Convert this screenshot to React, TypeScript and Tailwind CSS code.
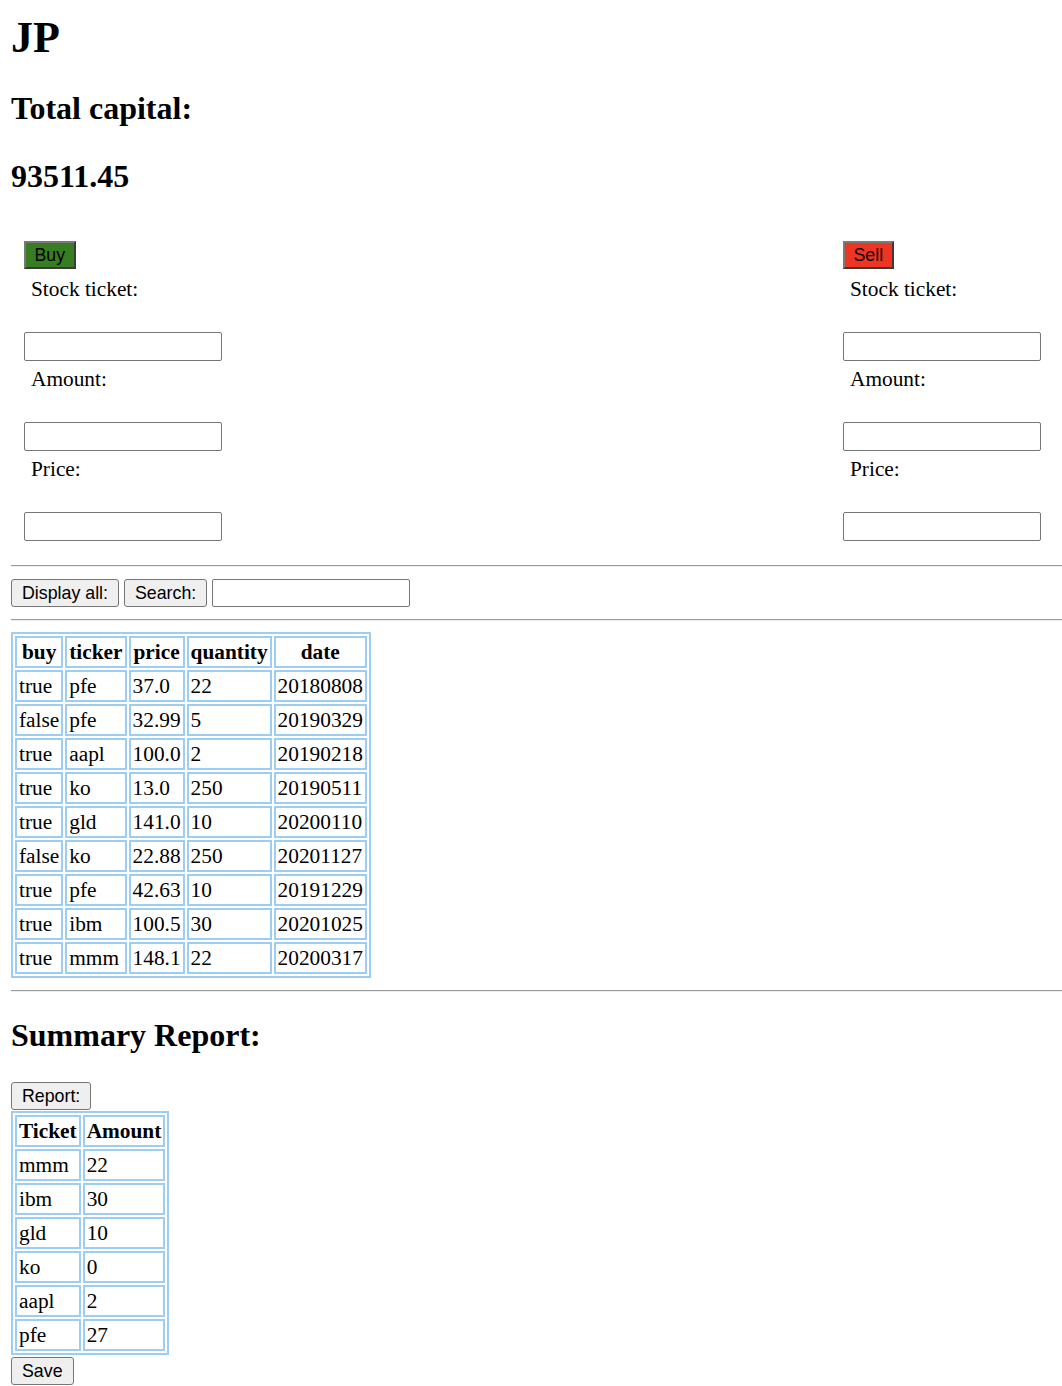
import React from "react";

const trades = [
  ["true", "pfe", "37.0", "22", "20180808"],
  ["false", "pfe", "32.99", "5", "20190329"],
  ["true", "aapl", "100.0", "2", "20190218"],
  ["true", "ko", "13.0", "250", "20190511"],
  ["true", "gld", "141.0", "10", "20200110"],
  ["false", "ko", "22.88", "250", "20201127"],
  ["true", "pfe", "42.63", "10", "20191229"],
  ["true", "ibm", "100.5", "30", "20201025"],
  ["true", "mmm", "148.1", "22", "20200317"],
];

const summary = [
  ["mmm", "22"],
  ["ibm", "30"],
  ["gld", "10"],
  ["ko", "0"],
  ["aapl", "2"],
  ["pfe", "27"],
];

const cell =
  "border-2 border-[#9dcdf3] px-[2px] py-[2px] leading-[24px] text-[21.33px] whitespace-nowrap";

function Hr() {
  return <div className="h-0 border-t border-t-[#9a9a9a] border-b border-b-[#eeeeee]" />;
}

function Btn({ children }: { children: React.ReactNode }) {
  return (
    <button className="h-[28px] px-[10px] bg-[#efefef] border border-[#767676] rounded-[3px] text-[17.8px] leading-[20px] text-black font-['Liberation_Sans',Arial,sans-serif]">
      {children}
    </button>
  );
}

function Field() {
  return <input className="block w-[198px] h-[29px] border border-[#767676] rounded-[2px] bg-white" />;
}

function TradeForm({ label, color }: { label: string; color: string }) {
  return (
    <div className="flex flex-col">
      <button
        className={
          "self-start h-[28px] px-[8.5px] border-2 border-t-[#7a7a7a] border-l-[#7a7a7a] border-r-[#3a3a3a] border-b-[#3a3a3a] text-[17.8px] leading-[20px] text-black font-['Liberation_Sans',Arial,sans-serif] " +
          color
        }
      >
        {label}
      </button>
      <p className="mt-[8px] ml-[7px] text-[21.33px] leading-[24px]">Stock ticket:</p>
      <div className="mt-[31px]">
        <Field />
      </div>
      <p className="mt-[6px] ml-[7px] text-[21.33px] leading-[24px]">Amount:</p>
      <div className="mt-[31px]">
        <Field />
      </div>
      <p className="mt-[6px] ml-[7px] text-[21.33px] leading-[24px]">Price:</p>
      <div className="mt-[31px]">
        <Field />
      </div>
    </div>
  );
}

export default function App() {
  return (
    <div className="bg-white min-h-screen pl-[11px] pt-[12px] text-black font-['Liberation_Serif','Times_New_Roman',serif]">
      <h1 className="text-[44px] font-bold leading-[52px]">JP</h1>
      <h2 className="mt-[26px] text-[32px] font-bold leading-[37px]">Total capital:</h2>
      <h2 className="mt-[31px] text-[32px] font-bold leading-[37px]">93511.45</h2>

      <div className="mt-[46px] flex justify-between pl-[13px] pr-[21px]">
        <TradeForm label="Buy" color="bg-[#377d22]" />
        <TradeForm label="Sell" color="bg-[#ee3524]" />
      </div>

      <div className="mt-[24px]">
        <Hr />
      </div>

      <div className="mt-[12px] flex gap-[5px]">
        <Btn>Display all:</Btn>
        <Btn>Search:</Btn>
        <input className="w-[198px] h-[28px] border border-[#767676] rounded-[2px] bg-white" />
      </div>

      <div className="mt-[12px]">
        <Hr />
      </div>

      <table className="mt-[11px] border-2 border-[#9dcdf3] border-separate border-spacing-[2px]">
        <thead>
          <tr>
            {["buy", "ticker", "price", "quantity", "date"].map((h) => (
              <th key={h} className={cell + " font-bold text-center"}>
                {h}
              </th>
            ))}
          </tr>
        </thead>
        <tbody>
          {trades.map((row, i) => (
            <tr key={i}>
              {row.map((v, j) => (
                <td key={j} className={cell + " text-left"}>
                  {v}
                </td>
              ))}
            </tr>
          ))}
        </tbody>
      </table>

      <div className="mt-[12px]">
        <Hr />
      </div>

      <h2 className="mt-[25px] text-[32px] font-bold leading-[37px]">Summary Report:</h2>

      <div className="mt-[28px]">
        <Btn>Report:</Btn>
      </div>

      <table className="mt-[1px] border-2 border-[#9dcdf3] border-separate border-spacing-[2px]">
        <thead>
          <tr>
            <th className={cell + " font-bold text-center"}>Ticket</th>
            <th className={cell + " font-bold text-center"}>Amount</th>
          </tr>
        </thead>
        <tbody>
          {summary.map((row, i) => (
            <tr key={i}>
              {row.map((v, j) => (
                <td key={j} className={cell + " text-left"}>
                  {v}
                </td>
              ))}
            </tr>
          ))}
        </tbody>
      </table>

      <div className="mt-[2px]">
        <Btn>Save</Btn>
      </div>
    </div>
  );
}
